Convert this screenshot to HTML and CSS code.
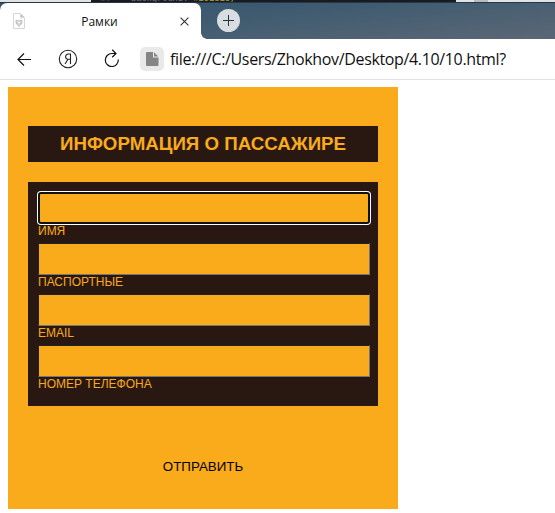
FILE: index.html
```html
<!DOCTYPE html>
<html lang="ru">
<head>
<meta charset="utf-8">
<title>Рамки</title>
<link rel="stylesheet" href="styles.css">
</head>
<body>
<div class="backdrop">
  <span class="backdrop-light"></span>
  <span class="backdrop-code"><span class="code-line"><span class="num">16</span><span class="prop">background:</span> <span class="val">#291818;</span></span></span>
  <span class="backdrop-right"><span class="thumb"></span></span>
</div>
<header class="tabs">
  <div class="tab">
    <svg class="favicon" width="12" height="16" viewBox="0 0 12 16"><path d="M.5.5h7l4 4v11H.5z" fill="#fff" stroke="#d6d6d6"/><path d="M7.3.5v4.2h4.2z" fill="#c4c4c4"/><path d="M2.300 7.500l1.200-.8L6 7.500l2.500-.8 1.200.8-.5 3L6 14 2.800 10.500z" fill="#c4c4c4"/><path d="M4 8.500l2 1.300 2-1.300M6 9.800v2" fill="none" stroke="#fff" stroke-width=".9"/></svg>
    <span class="tab-title">Рамки</span>
    <svg class="close" width="9" height="9" viewBox="0 0 9 9"><path d="M.6.6l7.8 7.8M8.4.6L.6 8.4" stroke="#30343a" stroke-width="1.1"/></svg>
  </div>
  <div class="strip">
    <div class="new-tab"><svg width="11" height="11" viewBox="0 0 11 11"><path d="M5.5 0v11M0 5.5h11" stroke="#263440"/></svg></div>
  </div>
</header>
<nav class="toolbar">
  <svg class="back" width="15" height="14" viewBox="0 0 15 14"><path d="M14 7.5H1M7 1.5l-6 6 6 6" fill="none" stroke="#111" stroke-width="1.2"/></svg>
  <svg class="home" width="20" height="20" viewBox="0 0 20 20"><circle cx="10" cy="10" r="8.7" fill="none" stroke="#222" stroke-width="1.1"/><path d="M12.500 15V5h-2C7 5 6.500 10.200 10 10.200h2.500M10 10.200L7 15" fill="none" stroke="#222" stroke-width="1.1"/></svg>
  <svg class="reload" width="16" height="18" viewBox="0 0 16 18"><path d="M14.300 10.500A6.500 6.500 0 1 1 7.800 4.500H12M8.200.800L12 4.500 8.200 8.200" fill="none" stroke="#111" stroke-width="1.2"/></svg>
  <span class="page-icon"><svg width="13" height="14" viewBox="0 0 13 14"><path d="M1 0h6v5.500h5.500V13q0 1-1 1H1q-1 0-1-1V1q0-1 1-1z" fill="#858585"/><path d="M8 .2L12.300 4.500H8z" fill="#858585"/></svg></span>
  <span class="url">file:///C:/Users/Zhokhov/Desktop/4.10/10.html?</span>
</nav>
<main class="page">
  <form class="card">
    <h3 class="heading"><span>ИНФОРМАЦИЯ О ПАССАЖИРЕ</span></h3>
    <div class="fields">
      <div class="field"><input class="focused" id="name" type="text"><label for="name">ИМЯ</label></div>
      <div class="field"><input id="passport" type="text"><label for="passport">ПАСПОРТНЫЕ</label></div>
      <div class="field"><input id="email" type="text"><label for="email">EMAIL</label></div>
      <div class="field"><input id="phone" type="text"><label for="phone">НОМЕР ТЕЛЕФОНА</label></div>
    </div>
    <button class="submit" type="button">ОТПРАВИТЬ</button>
  </form>
</main>
</body>
</html>
```

FILE: styles.css
```css
* { box-sizing: border-box; }
body { margin: 0; height: 513px; overflow: hidden; background: #fff; font-family: "Liberation Sans", sans-serif; }
svg { display: block; flex: none; }

.backdrop { display: flex; height: 3px; border-bottom: 1px solid #1f3a4c; }
.backdrop-light { width: 91px; background: #e2e2e2; }
.backdrop-code { width: 365px; background: #1a1a1f; overflow: hidden; }
.code-line { display: block; margin-top: -6px; padding-left: 9px; font: 9px/10px "Liberation Mono", monospace; letter-spacing: -0.2px; white-space: nowrap; }
.num { display: inline-block; width: 31px; color: #3d3d42; }
.prop { color: #77747e; }
.val { color: #b1a044; }
.backdrop-right { flex: 1; padding-left: 18px; background: #e2e2e2; }
.thumb { display: block; width: 14px; height: 2px; background: #bcbcbc; }

.tabs { display: flex; height: 36px; background: linear-gradient(174deg, #32536d, #415c71 45%, #5b6776); }
.tab { display: flex; align-items: center; width: 201px; padding: 0 12px 0 13px; background: #fff; border-radius: 7px 7px 0 0; }
.tab-title { flex: 1; margin: 2px 0 0 -7px; padding-left: 1px; text-align: center; font: 12px/16px "Open Sans", sans-serif; color: #111; }
.strip { flex: 1; padding: 6px 0 0 16px; background: radial-gradient(circle at 100% 0, transparent 5.500px, #fff 6px) 0 100% / 6px 6px no-repeat; }
.new-tab { display: flex; align-items: center; justify-content: center; width: 23px; height: 23px; border-radius: 50%; background: #d8dde1; }

.toolbar { display: flex; align-items: center; height: 41px; border-bottom: 1px solid #e2e2e2; background: #fff; }
.back { margin-left: 17px; }
.home { margin-left: 26px; }
.reload { margin-left: 26px; margin-top: -2px; }
.page-icon { display: flex; align-items: center; justify-content: center; width: 24px; height: 24px; margin-left: 20px; border-radius: 5px; background: #e9e9e9; }
.url { margin: 0 0 0 6px; font: 16px/20px "Open Sans", sans-serif; letter-spacing: -0.35px; color: #111; white-space: nowrap; }

.page { padding: 7px 8px 0; }
.card { width: 390px; height: 422px; padding: 39px 20px 0; background: #faab1b; }
.heading { height: 36px; margin: 0 0 20px; background: #291811; color: #faab1b; font-size: 18.72px; line-height: 35px; text-align: center; white-space: nowrap; }
.fields { height: 224px; padding: 10px 8px 0 10px; background: #291811; }
.field { height: 51px; }
.field input { display: block; width: 332px; height: 32px; margin: 0; padding: 0 6px; border: 1px solid; border-color: #202326 #767676 #767676 #202326; border-radius: 0; background: #faab1b; outline: none; }
.field .focused { border: 2px solid #101010; border-radius: 3px; box-shadow: 0 0 0 1px #fff; }
.field label { display: block; font-size: 12px; line-height: 14px; color: #faab1b; }
.submit { display: block; width: 350px; height: 40px; margin: 41px 0 0; padding: 0; border: 0; background: transparent; color: #000; font: 13.333px/40px "Liberation Sans", sans-serif; text-align: center; }
```
